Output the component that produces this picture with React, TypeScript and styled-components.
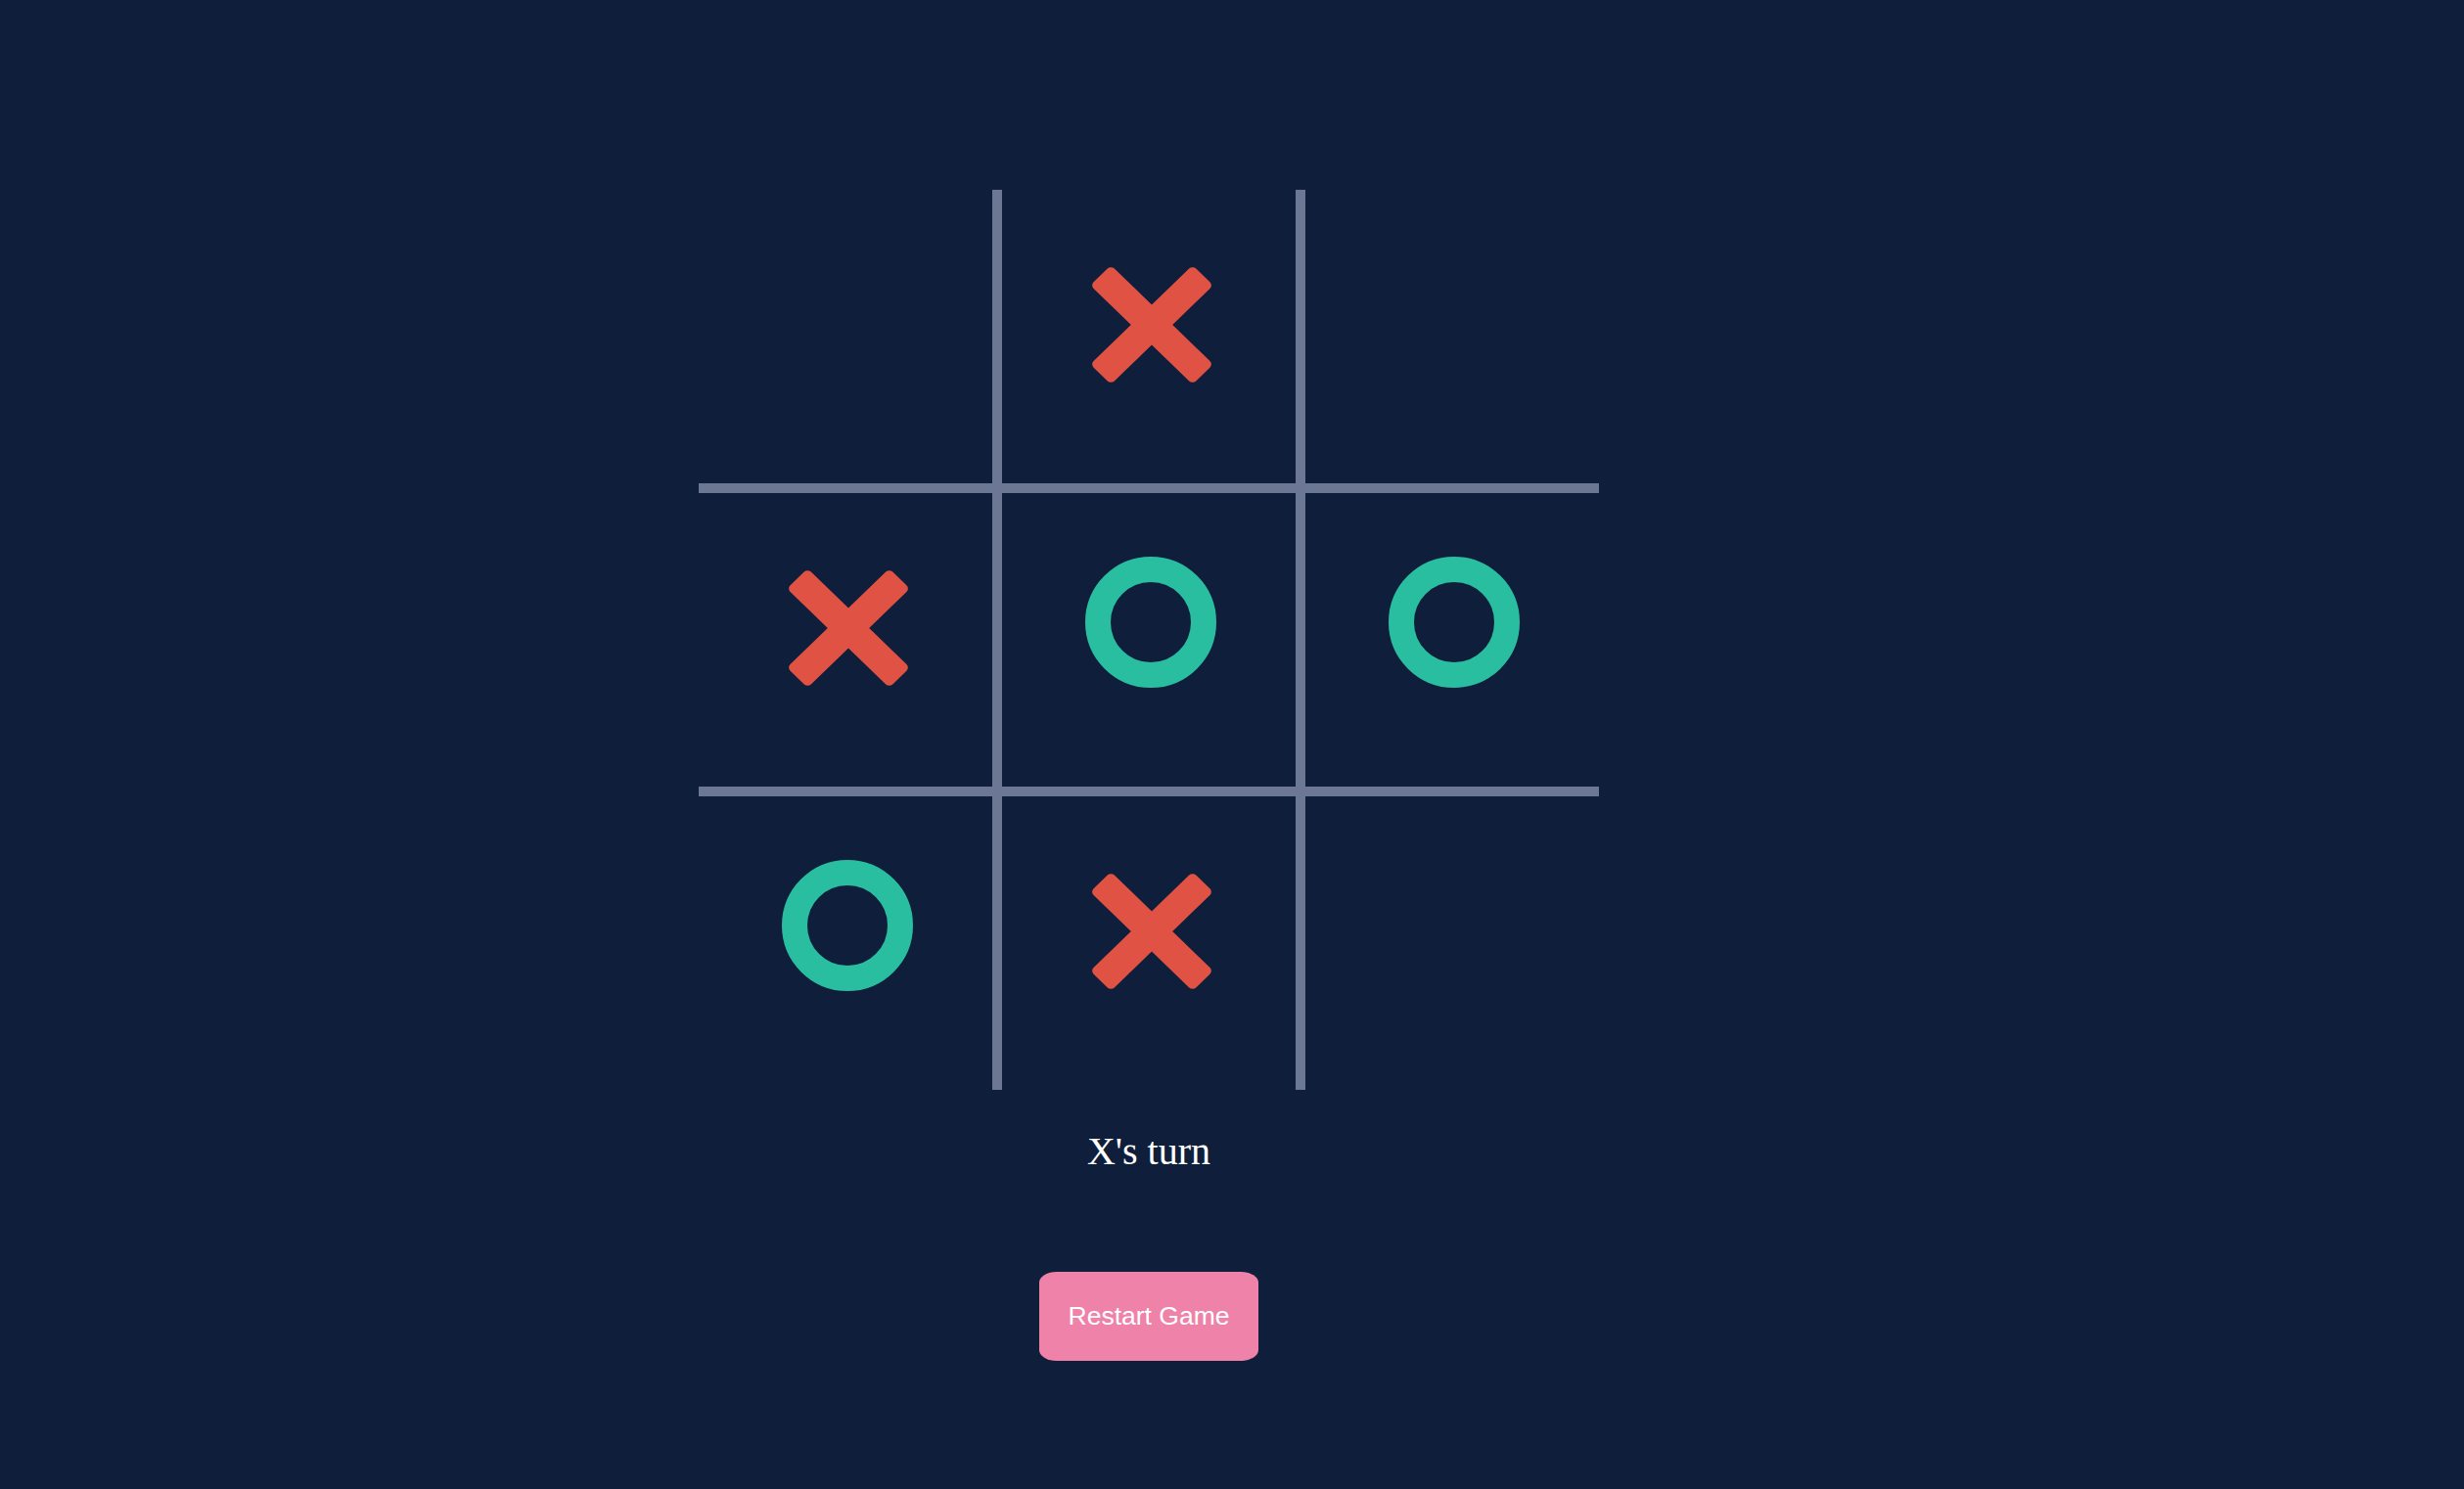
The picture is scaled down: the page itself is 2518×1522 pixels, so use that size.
import React from "react";
import styled, { createGlobalStyle } from "styled-components";

const GlobalStyle = createGlobalStyle`
  html, body {
    margin: 0;
    padding: 0;
    background: #0f1f3b;
  }
  body {
    min-height: 1522px;
    font-family: "Liberation Serif", "Times New Roman", serif;
  }
`;

const Page = styled.main`
  min-height: 1522px;
  box-sizing: border-box;
  padding: 194px 170px 0 0;
  display: flex;
  flex-direction: column;
  align-items: center;
  background: #0f1f3b;
`;

const Board = styled.div`
  display: grid;
  grid-template-columns: repeat(3, 300px);
  grid-template-rows: repeat(3, 300px);
  gap: 10px;
  background: #6b7793;
`;

const Cell = styled.button`
  all: unset;
  display: flex;
  align-items: center;
  justify-content: center;
  background: #0f1f3b;
  cursor: pointer;
`;

const MarkSvg = styled.svg<{ $dx: number; $dy: number }>`
  display: block;
  transform: translate(${(p) => p.$dx}px, ${(p) => p.$dy}px);
`;

const Status = styled.div`
  margin-top: 40px;
  font-family: "Liberation Serif", "Times New Roman", serif;
  font-size: 40px;
  line-height: 46px;
  color: #ffffff;
`;

const RestartButton = styled.button`
  margin-top: 100px;
  padding: 30px 30px;
  border: none;
  border-radius: 18px / 11px;
  background: #ee82a8;
  color: #ffffff;
  font-family: "Liberation Sans", Arial, sans-serif;
  font-size: 26.5px;
  line-height: 31px;
  cursor: pointer;
`;

const XMark = () => (
  <MarkSvg $dx={3} $dy={-12} width={124} height={120} viewBox="-62 -60 124 120">
    <g fill="#e05243" transform="scale(1 0.967)">
      <rect x={-74} y={-15} width={148} height={30} rx={5} transform="rotate(45)" />
      <rect x={-74} y={-15} width={148} height={30} rx={5} transform="rotate(-45)" />
    </g>
  </MarkSvg>
);

const OMark = () => (
  <MarkSvg $dx={2} $dy={-18} width={136} height={136} viewBox="-68 -68 136 136">
    <circle cx={0} cy={0} r={54} fill="none" stroke="#29bea0" strokeWidth={26} />
  </MarkSvg>
);

const board = ["", "X", "", "X", "O", "O", "O", "X", ""];

export default function App() {
  return (
    <>
      <GlobalStyle />
      <Page>
        <Board>
          {board.map((v, i) => (
            <Cell key={i} aria-label={`cell ${i + 1}`}>
              {v === "X" ? <XMark /> : v === "O" ? <OMark /> : null}
            </Cell>
          ))}
        </Board>
        <Status>X's turn</Status>
        <RestartButton>Restart Game</RestartButton>
      </Page>
    </>
  );
}
